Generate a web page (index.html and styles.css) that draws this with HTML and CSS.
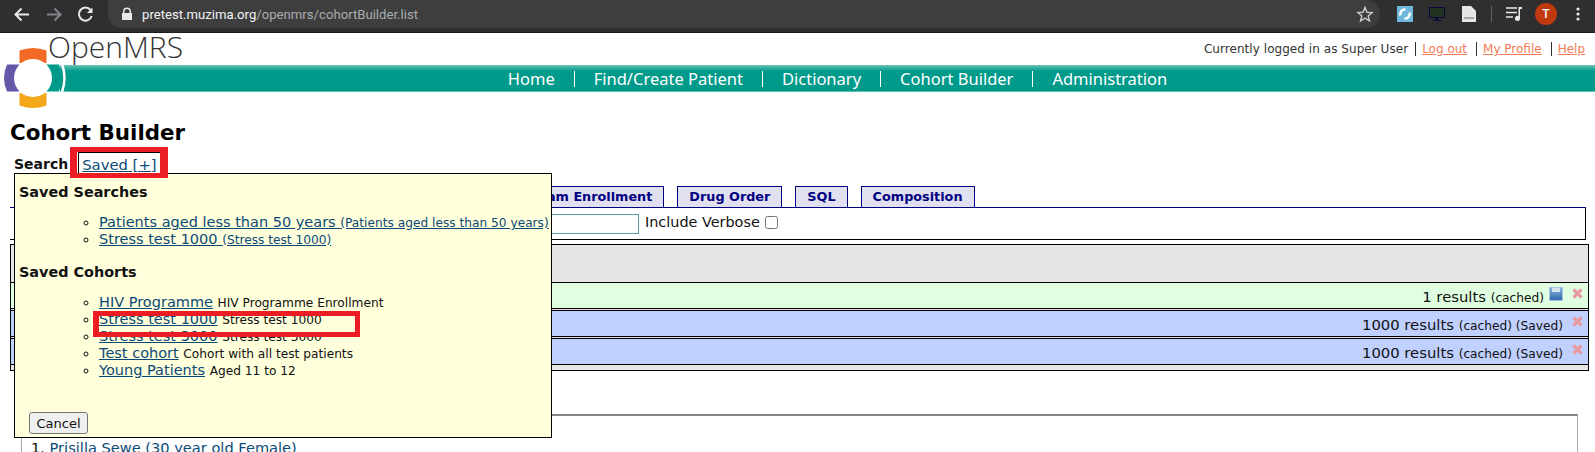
FILE: index.html
```html
<!DOCTYPE html>
<html lang="en">
<head>
<meta charset="utf-8">
<title>Cohort Builder</title>
<link rel="stylesheet" href="styles.css">
</head>
<body>
<div class="toolbar">
  <svg class="tb-icon" width="100" height="28" viewBox="0 0 100 28" fill="none">
    <path d="M29 14.500H16M21.500 8.500l-6 6 6 6" stroke="#e8eaed" stroke-width="2"/>
    <path d="M47 14.500h13M54.500 8.500l6 6-6 6" stroke="#80868b" stroke-width="2"/>
    <path d="M90.500 10a6.500 6.500 0 1 0 1.200 6" stroke="#e8eaed" stroke-width="2"/>
    <path d="M92.500 7.500v5.500H87z" fill="#e8eaed"/>
  </svg>
  <div class="omnibox">
    <svg class="lock" width="10" height="14" viewBox="1 0 10 14"><path d="M2 6V4.500a4 4 0 0 1 8 0V6h1v7H1V6zm1.500 0h5V4.500a2.500 2.500 0 0 0-5 0z" fill="#e8eaed"/></svg>
    <span class="url"><b>pretest.muzima.org</b>/openmrs/cohortBuilder.list</span>
    <svg class="star" width="18" height="18" viewBox="0 0 18 18"><path d="M9 2.500l2 4.700 5 .4-3.800 3.300 1.200 5L9 13.200l-4.400 2.700 1.200-5L2 7.600l5-.4z" fill="none" stroke="#c4c7c5" stroke-width="1.500"/></svg>
  </div>
  <div class="ext">
    <svg class="ext-a" width="16" height="16" viewBox="0 0 16 16"><rect width="16" height="16" fill="#6fb7dc"/><path d="M3.500 9.500A4.500 4.500 0 0 1 8.500 3.600M12.500 6.500A4.500 4.500 0 0 1 7.500 12.400" stroke="#fff" stroke-width="2.400" fill="none"/></svg>
    <svg class="ext-b" width="16" height="14" viewBox="0 0 16 14"><rect x=".5" y=".5" width="15" height="10" fill="#1f3320" stroke="#0a0a3a"/><path d="M4 14h8v-1H9.500v-2h-3v2H4z" fill="#0a0a3a"/></svg>
    <svg class="ext-c" width="14" height="16" viewBox="0 0 14 16"><path d="M0 0h9l5 5v11H0z" fill="#e6e6e6"/><rect x="2" y="11" width="10" height="2" fill="#aaa"/></svg>
    <i class="ext-sep"></i>
    <svg class="ext-d" width="16" height="16" viewBox="0 0 16 16"><path d="M0 2h11M0 6.500h11M0 11h7" stroke="#e8eaed" stroke-width="1.500"/><path d="M12.500 1H16v2h-2v9.500a2.500 2.500 0 1 1-1.500-2.300z" fill="#e8eaed"/></svg>
    <span class="avatar">T</span>
    <svg class="ext-e" width="4" height="14" viewBox="0 0 4 14"><circle cx="2" cy="2" r="1.600" fill="#e8eaed"/><circle cx="2" cy="7" r="1.600" fill="#e8eaed"/><circle cx="2" cy="12" r="1.600" fill="#e8eaed"/></svg>
  </div>
</div>

<header class="header">
  <div class="brand-row">
    <span class="brand">OpenMRS</span>
    <div class="user">
      <span class="user-name">Currently logged in as Super User</span>
      <a href="#" class="user-link">Log out</a>
      <a href="#" class="user-link">My Profile</a>
      <a href="#" class="user-link">Help</a>
    </div>
  </div>
  <nav class="nav">
    <a href="#">Home</a>
    <a href="#">Find/Create Patient</a>
    <a href="#">Dictionary</a>
    <a href="#">Cohort Builder</a>
    <a href="#">Administration</a>
  </nav>
  <svg class="logo" width="68" height="62" viewBox="0 0 68 62">
    <path d="M19.500 3.500Q33-1.500 46.500 3.500V16h-27z" fill="#f26a25"/>
    <path d="M19.500 58.500Q33 63.500 46.500 58.500V46h-27z" fill="#f3a81b"/>
    <path d="M19.500 17.500H7Q1 31 7 44.500H19.500z" fill="#6558a8"/>
    <path d="M46.500 17.500H59Q64 31 59 44.500H46.500z" fill="#009a8b"/>
    <path d="M62 17Q67 31 62 45" fill="none" stroke="#fff" stroke-width="2.500"/>
    <circle cx="33" cy="31" r="19" fill="#fff"/>
  </svg>
</header>

<main class="page">
  <h1 class="title">Cohort Builder</h1>
  <div class="search-tabs">
    <span class="search-label">Search</span>
    <a href="#" class="saved-link">Saved [+]</a>
    <div class="saved-mark"></div>
    <section class="popup">
      <h2>Saved Searches</h2>
      <ul>
        <li><a href="#">Patients aged less than 50 years <small>(Patients aged less than 50 years)</small></a></li>
        <li><a href="#">Stress test 1000 <small>(Stress test 1000)</small></a></li>
      </ul>
      <h2>Saved Cohorts</h2>
      <ul>
        <li><a href="#">HIV Programme</a> <small>HIV Programme Enrollment</small></li>
        <li><a href="#">Stress test 1000</a> <small>Stress test 1000</small><div class="item-mark"></div></li>
        <li><a href="#">Stress test 3000</a> <small>Stress test 3000</small></li>
        <li><a href="#">Test cohort</a> <small>Cohort with all test patients</small></li>
        <li><a href="#">Young Patients</a> <small>Aged 11 to 12</small></li>
      </ul>
      <button class="cancel" type="button">Cancel</button>
    </section>
  </div>

  <div class="tabs">
    <span class="tab">Program Enrollment</span>
    <span class="tab">Drug Order</span>
    <span class="tab">SQL</span>
    <span class="tab">Composition</span>
  </div>
  <div class="query">
    <input class="query-input" type="text">
    <label class="verbose">Include Verbose <input type="checkbox"></label>
  </div>

  <div class="history">
    <div class="row green"><span>1 results <small>(cached)</small></span><svg class="save" width="14" height="14" viewBox="0 0 14 14"><defs><linearGradient id="disk" x1="0" y1="0" x2="0" y2="1"><stop offset="0" stop-color="#8cb4dc"/><stop offset="1" stop-color="#2f68ab"/></linearGradient></defs><rect x=".5" y=".5" width="13" height="13" fill="url(#disk)" stroke="#a9c4dd"/><rect x="3" y="1" width="8" height="4" fill="#d5e3f0"/></svg><svg class="del" width="11" height="11" viewBox="0 0 11 11"><path d="M1.500 1.500l8 8M9.500 1.500l-8 8" stroke="#e99a9f" stroke-width="3.200"/></svg></div>
    <div class="row blue"><span>1000 results <small>(cached) (Saved)</small></span><svg class="del" width="11" height="11" viewBox="0 0 11 11"><path d="M1.500 1.500l8 8M9.500 1.500l-8 8" stroke="#e99a9f" stroke-width="3.200"/></svg></div>
    <div class="row blue"><span>1000 results <small>(cached) (Saved)</small></span><svg class="del" width="11" height="11" viewBox="0 0 11 11"><path d="M1.500 1.500l8 8M9.500 1.500l-8 8" stroke="#e99a9f" stroke-width="3.200"/></svg></div>
  </div>

  <div class="results">
    <div class="results-title">Patients in Young Patients: Aged 11 to 12 years old</div>
    <div class="results-item">1. <a href="#" class="patient">Prisilla Sewe (30 year old Female)</a></div>
  </div>
</main>
</body>
</html>
```
FILE: styles.css
```css
* { box-sizing: border-box; }
html, body { margin: 0; height: 452px; overflow: hidden; background: #fff; }
body { font-family: "DejaVu Sans", Verdana, sans-serif; font-size: 14px; color: #111; }
a { color: #0b4a78; }

.toolbar { height: 33px; background: #2f2f2f; display: flex; align-items: flex-start; border-bottom: 1px solid #1c1c1c; }
.tb-icon { flex: none; }
.omnibox { flex: none; width: 1272px; height: 28px; margin-left: 8px; background: #3e3e3e; border-radius: 0 14px 14px 14px; display: flex; align-items: center; padding-left: 14px; }
.lock { flex: none; }
.url { font-family: Roboto, sans-serif; font-size: 13.150px; color: #a9acaf; margin-left: 10px; white-space: nowrap; }
.url b { font-weight: 400; color: #f1f3f4; }
.star { margin-left: auto; margin-right: 6px; }
.ext { flex: 1; display: flex; align-items: center; height: 28px; }
.ext-a { margin-left: 17px; flex: none; }
.ext-b { margin-left: 16px; flex: none; }
.ext-c { margin-left: 17px; flex: none; }
.ext-sep { margin-left: 15px; width: 1px; height: 16px; background: #5f6368; flex: none; }
.ext-d { margin-left: 14px; flex: none; }
.avatar { margin-left: 13px; width: 22px; height: 22px; border-radius: 50%; background: #c0390f; color: #fff; font: 500 12px/22px Roboto, sans-serif; text-align: center; flex: none; }
.ext-e { margin-left: 19px; flex: none; }

.header { position: relative; height: 59px; }
.brand-row { height: 32px; display: flex; justify-content: space-between; padding-left: 48px; }
.brand { font-family: "Open Sans", sans-serif; font-weight: 300; font-size: 30px; line-height: 27px; color: #333; }
.user { display: flex; align-items: flex-end; font-size: 12px; line-height: 14px; padding: 0 10px 9px 0; }
.user-name { color: #333; padding-right: 7px; letter-spacing: .05px; }
.user-link { color: #f37b56; border-left: 1px solid #333; padding-left: 6px; margin-right: 9px; }
.user-link:last-child { margin-right: 0; }
.nav { margin-left: 60px; height: 27px; display: flex; justify-content: center; align-items: center; padding-left: 20px; background: linear-gradient(#6dc4b8, #009a8b 6px, #009a8b 26px, #bfe4df); }
.nav a { font-family: "Noto Sans", sans-serif; font-size: 16.500px; color: #fff; text-decoration: none; line-height: 16px; padding: 0 19px; border-left: 1px solid #fff; }
.nav a:first-child { border-left: 0; }
.logo { position: absolute; left: 0; top: 14px; }

.page { padding: 29px 9px 0 10px; }
.title { margin: 0; font-size: 21.400px; line-height: 24px; font-weight: 700; color: #000; }
.search-tabs { position: relative; height: 26px; margin-top: 2px; padding-left: 4px; display: flex; align-items: flex-start; }
.search-label { font-weight: 700; font-size: 14px; line-height: 21px; margin-top: 7px; }
.saved-link { margin: 5px 0 0 10px; padding: 0 4px 0 3px; height: 21px; font-size: 14.800px; line-height: 24px; border: 1px solid #000; border-bottom: 0; }
.saved-mark { position: absolute; left: 60px; top: 0; width: 98px; height: 31px; border: solid #ec1c24; border-width: 5px 8px 5px 7px; z-index: 3; }

.popup { position: absolute; left: 4px; top: 26px; width: 538px; height: 265px; background: #ffffdc; border: 1px solid #000; padding: 0 4px; z-index: 2; }
.popup h2 { margin: 0; font-size: 14.400px; line-height: 17px; font-weight: 700; padding-top: 10px; }
.popup ul { margin: 13px 0 6px; padding: 0 0 0 80px; list-style: circle; font-size: 14.500px; }
.popup small { font-size: 12.200px; }
.popup li { position: relative; height: 17px; line-height: 17px; white-space: nowrap; }
.item-mark { position: absolute; left: -6px; top: 0; width: 267px; height: 26px; border: 5px solid #ec1c24; border-left-width: 6px; z-index: 3; }
.cancel { position: absolute; left: 14px; bottom: 3px; width: 59px; height: 22px; font: 13px "DejaVu Sans", sans-serif; padding: 0; background: #efefef; border: 1px solid #767676; border-radius: 3px; color: #111; }

.tabs { height: 22px; margin-top: 13px; display: flex; gap: 13px; border-bottom: 1px solid #000080; padding-left: 485px; }
.tab { height: 21px; padding: 0 11px; font-size: 12.800px; font-weight: 700; line-height: 20px; color: #000080; background: #e0e0f0; border: 1px solid #000080; border-bottom: 0; white-space: nowrap; }
.query { height: 32px; border: solid #000; border-width: 0 1px 1px 0; display: flex; align-items: center; padding-left: 488px; }
.query-input { width: 141px; height: 20px; border: 1px solid #5f9ea0; background: #fff; padding: 0; margin-right: 6px; }
.verbose { display: flex; align-items: center; gap: 5px; font-size: 14.400px; margin-bottom: 3px; }
.verbose input { margin: 0; width: 13px; height: 13px; }

.history { height: 127px; margin: 4px -3px 0 0; border: 1px solid #000; background: #e6e6e6; padding-top: 37px; }
.row { height: 27px; margin-bottom: 1px; border: solid #000; border-width: 1px 0; display: flex; align-items: center; justify-content: flex-end; font-size: 14.800px; padding: 2px 5px 0 0; }
.row small { font-size: 12.200px; }
.green { background: #e0ffe0; }
.blue { background: #c0d0ff; }
.save { margin-left: 5px; margin-top: -6px; flex: none; }
.del { margin-left: 9px; margin-top: -7px; flex: none; }

.results { margin: 43px 8px 0 11px; border: 1px solid #aaa; border-top: 2px solid #888; padding: 6px 9px 0; }
.results-title { font-weight: 700; font-size: 14px; line-height: 16px; white-space: nowrap; }
.results-item { font-size: 14.600px; line-height: 18px; margin-top: 1px; white-space: nowrap; }
.patient { text-decoration: none; }
```
